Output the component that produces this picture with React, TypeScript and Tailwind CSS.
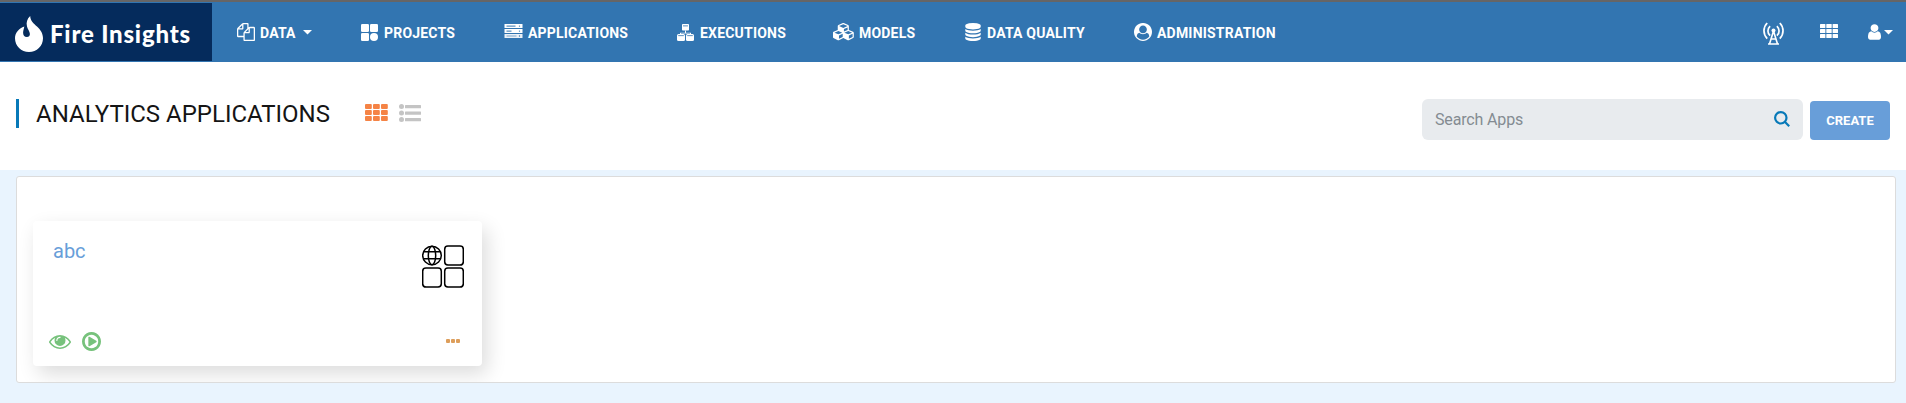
import React from 'react';
import type { ReactNode } from 'react';

const Caret = () => (
  <svg className="block h-[5px] w-[9px]" viewBox="0 0 9 5" fill="currentColor">
    <path d="M0 0h9L4.5 4.5z" />
  </svg>
);

const CopyIcon = () => (
  <svg className="block h-[18px] w-[18px]" viewBox="0 0 1792 1792" fill="currentColor">
    <path d="M1696 384q40 0 68 28t28 68v1216q0 40-28 68t-68 28h-960q-40 0-68-28t-28-68v-288h-544q-40 0-68-28t-28-68v-672q0-40 20-88t48-76l408-408q28-28 76-48t88-20h416q40 0 68 28t28 68v328q68-40 128-40h416zm-544 213l-299 299h299v-299zm-640-384l-299 299h299v-299zm196 647l316-316v-416h-384v416q0 40-28 68t-68 28h-416v640h512v-256q0-40 20-88t48-76zm956 804v-1152h-384v416q0 40-28 68t-68 28h-416v640h896z" />
  </svg>
);

const ProjectsIcon = () => (
  <svg className="block h-[17px] w-[17px]" viewBox="0 0 17 17" fill="currentColor">
    <rect x="0" y="0" width="8" height="8" rx="1.3" />
    <rect x="9" y="0" width="8" height="8" rx="1.3" />
    <rect x="0" y="9" width="8" height="8" rx="1.3" />
    <circle cx="13" cy="13" r="4" />
  </svg>
);

const ServerIcon = () => (
  <svg className="block h-[14px] w-[19px]" viewBox="0 0 19 14">
    <g fill="#fff">
      <rect x="0.5" y="0" width="18" height="4" />
      <rect x="0.5" y="5" width="18" height="4" />
      <rect x="0.5" y="10" width="18" height="4" fillOpacity="0.9" />
    </g>
    <g fill="#3275b1">
      <rect x="2.5" y="1.6" width="9" height="1" />
      <rect x="2.5" y="6.6" width="5" height="1" />
      <rect x="2.5" y="11.5" width="10" height="1" fillOpacity="0.6" />
      <circle cx="15.5" cy="2.1" r="0.7" />
      <circle cx="15.5" cy="7.1" r="0.7" />
      <circle cx="15.5" cy="12" r="0.7" />
    </g>
  </svg>
);

const ExecutionsIcon = () => (
  <svg className="block h-[17px] w-[17px]" viewBox="0 0 17 17" fill="#fff">
    <rect x="5" y="0" width="7" height="6.6" rx="0.8" />
    <rect x="6" y="1.5" width="5" height="0.8" fill="#3275b1" />
    <path d="M8 6.5h1v2.2h5v1.6h-1V9.6H4v0.7H3V8.7h5z" />
    <rect x="0" y="10" width="8" height="7" rx="1.5" />
    <rect x="9" y="10" width="8" height="7" rx="1.5" />
    <rect x="1.2" y="11.3" width="5.6" height="0.8" fill="#3275b1" />
    <rect x="10.2" y="11.3" width="5.6" height="0.8" fill="#3275b1" />
  </svg>
);

const CubesIcon = () => (
  <svg className="block h-[18px] w-[21px]" viewBox="0 0 2176 1865" fill="currentColor">
    <path transform="translate(-20 0)" d="M640 1632l384-192v-314l-384 164v342zm-64-454l404-173-404-173-404 173zm1088 454l384-192v-314l-384 164v342zm-64-454l404-173-404-173-404 173zm-448-293l384-165v-266l-384 164v267zm-64-379l441-189-441-189-441 189zm1088 518v416q0 36-19 67t-52 47l-448 224q-25 14-57 14t-57-14l-448-224q-4-2-7-4-2 2-7 4l-448 224q-25 14-57 14t-57-14l-448-224q-33-16-52-47t-19-67v-416q0-38 21.5-70t56.5-48l434-186v-400q0-38 21.5-70t56.5-48l448-192q23-10 50-10t50 10l448 192q35 16 56.5 48t21.5 70v400l434 186q36 16 57 48t21 70z" />
  </svg>
);

const DatabaseIcon = () => (
  <svg className="block h-[18px] w-[16px]" viewBox="100 0 1592 1792" fill="currentColor">
    <path d="M896 768q237 0 443-43t325-127v170q0 69-103 128t-280 93.5-385 34.5-385-34.5-280-93.5-103-128v-170q119 84 325 127t443 43zm0 768q237 0 443-43t325-127v170q0 69-103 128t-280 93.5-385 34.5-385-34.5-280-93.5-103-128v-170q119 84 325 127t443 43zm0-384q237 0 443-43t325-127v170q0 69-103 128t-280 93.5-385 34.5-385-34.5-280-93.5-103-128v-170q119 84 325 127t443 43zm0-1152q208 0 385 34.5t280 93.5 103 128v128q0 69-103 128t-280 93.5-385 34.5-385-34.5-280-93.5-103-128v-128q0-69 103-128t280-93.5 385-34.5z" />
  </svg>
);

const AdminIcon = () => (
  <svg className="block h-[18px] w-[18px]" viewBox="0 0 1792 1792" fill="currentColor">
    <path d="M1523 1339q-22-155-87.5-257.5t-184.5-118.5q-67 74-159.5 115.5t-195.5 41.5-195.5-41.5-159.5-115.5q-119 16-184.5 118.5t-87.5 257.5q106 150 271 237.5t356 87.5 356-87.5 271-237.5zm-243-699q0-159-112.5-271.5t-271.5-112.5-271.5 112.5-112.5 271.5 112.5 271.5 271.5 112.5 271.5-112.5 112.5-271.5zm512 256q0 182-71 347.5t-190.5 286-285.5 191.5-349 71-348.5-71-286-191-191-286-71-349 71-348.500 191-286 286-191 348.500-71 348.500 71 286 191 191 286 71 348.500z" />
  </svg>
);

const TowerIcon = () => (
  <svg className="block h-[23px] w-[21px]" viewBox="0 0 21 23" fill="none" stroke="#fff" strokeWidth="1.7">
    <path d="M4.200 1C-.1 5.400-.1 12.200 4.200 16.600M16.800 1c4.300 4.400 4.300 11.200 0 15.600" />
    <path d="M7.100 4.200c-2.900 2.800-2.900 6.900 0 9.500M13.900 4.200c2.900 2.800 2.900 6.900 0 9.500" />
    <circle cx="10.500" cy="8.600" r="2" fill="#fff" stroke="none" />
    <path d="M10.500 9L6.500 22M10.500 9l4 13M5 22h11M8.300 17h4.400" strokeWidth="1.6" />
  </svg>
);

const cells = [0, 1, 2].flatMap((r) => [0, 1, 2].map((c) => [c, r]));

const UserIcon = () => (
  <svg className="block h-4 w-[13px]" viewBox="256 128 1280 1536" fill="currentColor">
    <path d="M1536 1399q0 109-62.5 187t-150.5 78h-854q-88 0-150.5-78t-62.5-187q0-85 8.5-160.5t31.5-152 58.5-131 94-89 134.5-34.5q131 128 313 128t313-128q76 0 134.5 34.5t94 89 58.5 131 31.5 152 8.5 160.5zm-256-887q0 159-112.5 271.5t-271.5 112.5-271.5-112.5-112.5-271.5 112.5-271.5 271.5-112.5 271.5 112.5 112.5 271.5z" />
  </svg>
);

const Logo = () => (
  <div className="flex h-[58px] w-[212px] items-start bg-[#052b5c] pl-[15px] pt-[13px]">
    <svg className="block h-9 w-7 shrink-0" viewBox="0 0 28 36" fill="#fff">
      <path d="M15.200 0C12 3 11 6.500 12 10.500c.6 2.700 2.900 5 2.900 7.600 0 1.800-1.200 3-2.900 3-2.800 0-4-2.100-3.900-4.600.1-2.100.9-4 1.200-6C4.200 12.500 0 16.500 0 22.300 0 30 6.200 36 14 36s14-6 14-13.700c0-4.800-2.400-8.400-6-11.800C18.800 7.500 15.300 5 15.200 0z" />
    </svg>
    <span className="ml-[7px] mt-1 whitespace-nowrap font-['Lato',sans-serif] text-[24px] font-black leading-7 tracking-[0.8px] text-white">
      Fire Insights
    </span>
  </div>
);

function NavItem({ icon, label, className, gap, caret }: { icon: ReactNode; label: string; className: string; gap: string; caret?: boolean }) {
  return (
    <a className={`flex shrink-0 items-center ${className}`}>
      <span className="flex h-[18px] items-center">{icon}</span>
      <span className={`whitespace-nowrap pt-0.5 text-sm font-bold leading-5 tracking-[0.2px] ${gap}`}>{label}</span>
      {caret && (
        <span className="ml-[7px]">
          <Caret />
        </span>
      )}
    </a>
  );
}

export default function App() {
  return (
    <div className="h-[403px] w-[1906px] overflow-hidden bg-[#e9f4fe] font-['Roboto',sans-serif]">
      <div className="h-0.5 bg-[#666566]" />
      <header className="flex h-[60px] items-start bg-[#3275b1] pt-px text-white">
        <Logo />
        <nav className="flex h-[58px] items-center pl-[25px]">
          <NavItem icon={<CopyIcon />} label="DATA" className="w-[124px]" gap="ml-[5px]" caret />
          <NavItem icon={<ProjectsIcon />} label="PROJECTS" className="w-[143px]" gap="ml-1.5" />
          <NavItem icon={<span className="-mt-0.5"><ServerIcon /></span>} label="APPLICATIONS" className="w-[173px]" gap="ml-[5px]" />
          <NavItem icon={<ExecutionsIcon />} label="EXECUTIONS" className="w-[156px]" gap="ml-1.5" />
          <NavItem icon={<CubesIcon />} label="MODELS" className="w-[132px]" gap="ml-[5px]" />
          <NavItem icon={<DatabaseIcon />} label="DATA QUALITY" className="w-[169px]" gap="ml-1.5" />
          <NavItem icon={<AdminIcon />} label="ADMINISTRATION" className="" gap="ml-[5px]" />
        </nav>
        <div className="ml-auto flex pr-[13px] pt-[19px]">
          <TowerIcon />
          <svg className="ml-9 mt-0.5 block h-[14px] w-[18px]" viewBox="0 0 18 14" fill="#fff">
            {cells.map(([c, r]) => (
              <rect key={`${c}-${r}`} x={c * 6.3} y={r * 5} width="5.4" height="4" rx="0.5" />
            ))}
          </svg>
          <span className="ml-[30px] mt-0.5">
            <UserIcon />
          </span>
          <span className="ml-[3px] mt-2">
            <Caret />
          </span>
        </div>
      </header>

      <section className="flex h-[108px] items-start bg-white pl-4 pr-4 pt-[37px]">
        <div className="flex h-[29px] w-[314px] items-center border-l-[3px] border-[#0779b8] pl-[17px]">
          <h1 className="whitespace-nowrap text-2xl font-normal leading-7 text-[#151515]">ANALYTICS APPLICATIONS</h1>
        </div>
        <svg className="ml-[35px] mt-[5px] block h-[17px] w-[23px]" viewBox="0 0 23 17" fill="#f58345">
          {cells.map(([c, r]) => (
            <rect key={`${c}-${r}`} x={c * 8} y={r * 6} width="6.8" height="5" rx="1" />
          ))}
        </svg>
        <svg className="ml-[11px] mt-[5px] block h-[18px] w-[22px]" viewBox="0 0 22 18" fill="#c4c4c4">
          {[2.5, 9, 15.5].map((y) => (
            <g key={y}>
              <circle cx="2.5" cy={y} r="2.5" />
              <rect x="6" y={y - 1.5} width="16" height="3.2" rx="0.5" />
            </g>
          ))}
        </svg>
        <div className="ml-auto flex h-[41px] w-[381px] items-center justify-between rounded-md bg-[#e8ebee] pl-[13px] pr-[13px]">
          <span className="text-base leading-6 tracking-[-0.15px] text-[#848b92]">Search Apps</span>
          <svg className="-mt-0.5 block h-4 w-4" viewBox="0 0 16 16" fill="none" stroke="#0779b8" strokeWidth="2.2">
            <circle cx="6.8" cy="6.8" r="5.7" />
            <path d="M10.800 10.800l4.400 4.400" />
          </svg>
        </div>
        <button className="ml-[7px] mt-0.5 h-[39px] w-20 rounded bg-[#689ed9] pt-px text-[13px] font-bold text-white">CREATE</button>
      </section>

      <main className="pl-4 pr-[10px] pt-1.5">
        <div className="h-[207px] overflow-hidden rounded-[3px] border border-[#dcdcdc] bg-white pl-4 pt-11">
          <article className="flex h-[145px] w-[449px] flex-col justify-between rounded bg-white pb-[13px] pl-4 pr-[18px] pt-[18px] shadow-[5px_8px_20px_rgba(0,0,0,0.14)]">
            <div className="flex items-start justify-between">
              <span className="ml-1 text-xl leading-6 text-[#689ed9]">abc</span>
              <svg className="mt-1.5 block h-[43px] w-[42px]" viewBox="0 0 42 43" fill="none" stroke="#000" strokeWidth="1.5">
                <circle cx="10" cy="10.5" r="9.3" />
                <ellipse cx="10" cy="10.5" rx="3.7" ry="9.3" />
                <path d="M1.800 6.700h16.400M1.800 13.700h16.400" />
                <rect x="22.7" y="1" width="18.6" height="19" rx="3.2" />
                <rect x="0.7" y="23" width="18.6" height="19" rx="3.2" />
                <rect x="22.7" y="23" width="18.6" height="19" rx="3.2" />
              </svg>
            </div>
            <div className="flex items-center text-[#77c27c]">
              <svg className="mt-0.5 block h-[22px] w-[22px]" viewBox="0 64 1792 1792" fill="currentColor">
                <path d="M1664 960q-152-236-381-353 61 104 61 225 0 185-131.5 316.5t-316.5 131.5-316.5-131.5-131.5-316.5q0-121 61-225-229 117-381 353 133 205 333.5 326.5t434.5 121.5 434.5-121.5 333.5-326.5zm-720-384q0-20-14-34t-34-14q-125 0-214.5 89.5t-89.5 214.5q0 20 14 34t34 14 34-14 14-34q0-86 61-147t147-61q20 0 34-14t14-34zm848 384q0 34-20 69-140 230-376.5 368.5t-499.5 138.5-499.5-139-376.5-368q-20-35-20-69t20-69q140-229 376.5-368t499.5-139 499.5 139 376.5 368q20 35 20 69z" />
              </svg>
              <svg className="ml-[11px] block h-[19px] w-[19px]" viewBox="128 128 1536 1536" fill="currentColor">
                <path d="M1312 896q0 37-32 55l-544 320q-15 9-32 9-16 0-32-8-32-19-32-56v-640q0-37 32-56 33-18 64 1l544 320q32 18 32 55zm128 0q0-148-73-273t-198-198-273-73-273 73-198 198-73 273 73 273 198 198 273 73 273-73 198-198 73-273zm224 0q0 209-103 385.5t-279.5 279.5-385.5 103-385.5-103-279.5-279.5-103-385.5 103-385.5 279.5-279.5 385.5-103 385.5 103 279.5 279.5 103 385.5z" />
              </svg>
              <svg className="ml-auto mr-1 block h-1 w-[14px]" viewBox="0 0 14 4" fill="#dd9e5b">
                <rect x="0" y="0" width="4" height="4" rx="1" />
                <rect x="5" y="0" width="4" height="4" rx="1" />
                <rect x="10" y="0" width="4" height="4" rx="1" />
              </svg>
            </div>
          </article>
        </div>
      </main>
    </div>
  );
}
